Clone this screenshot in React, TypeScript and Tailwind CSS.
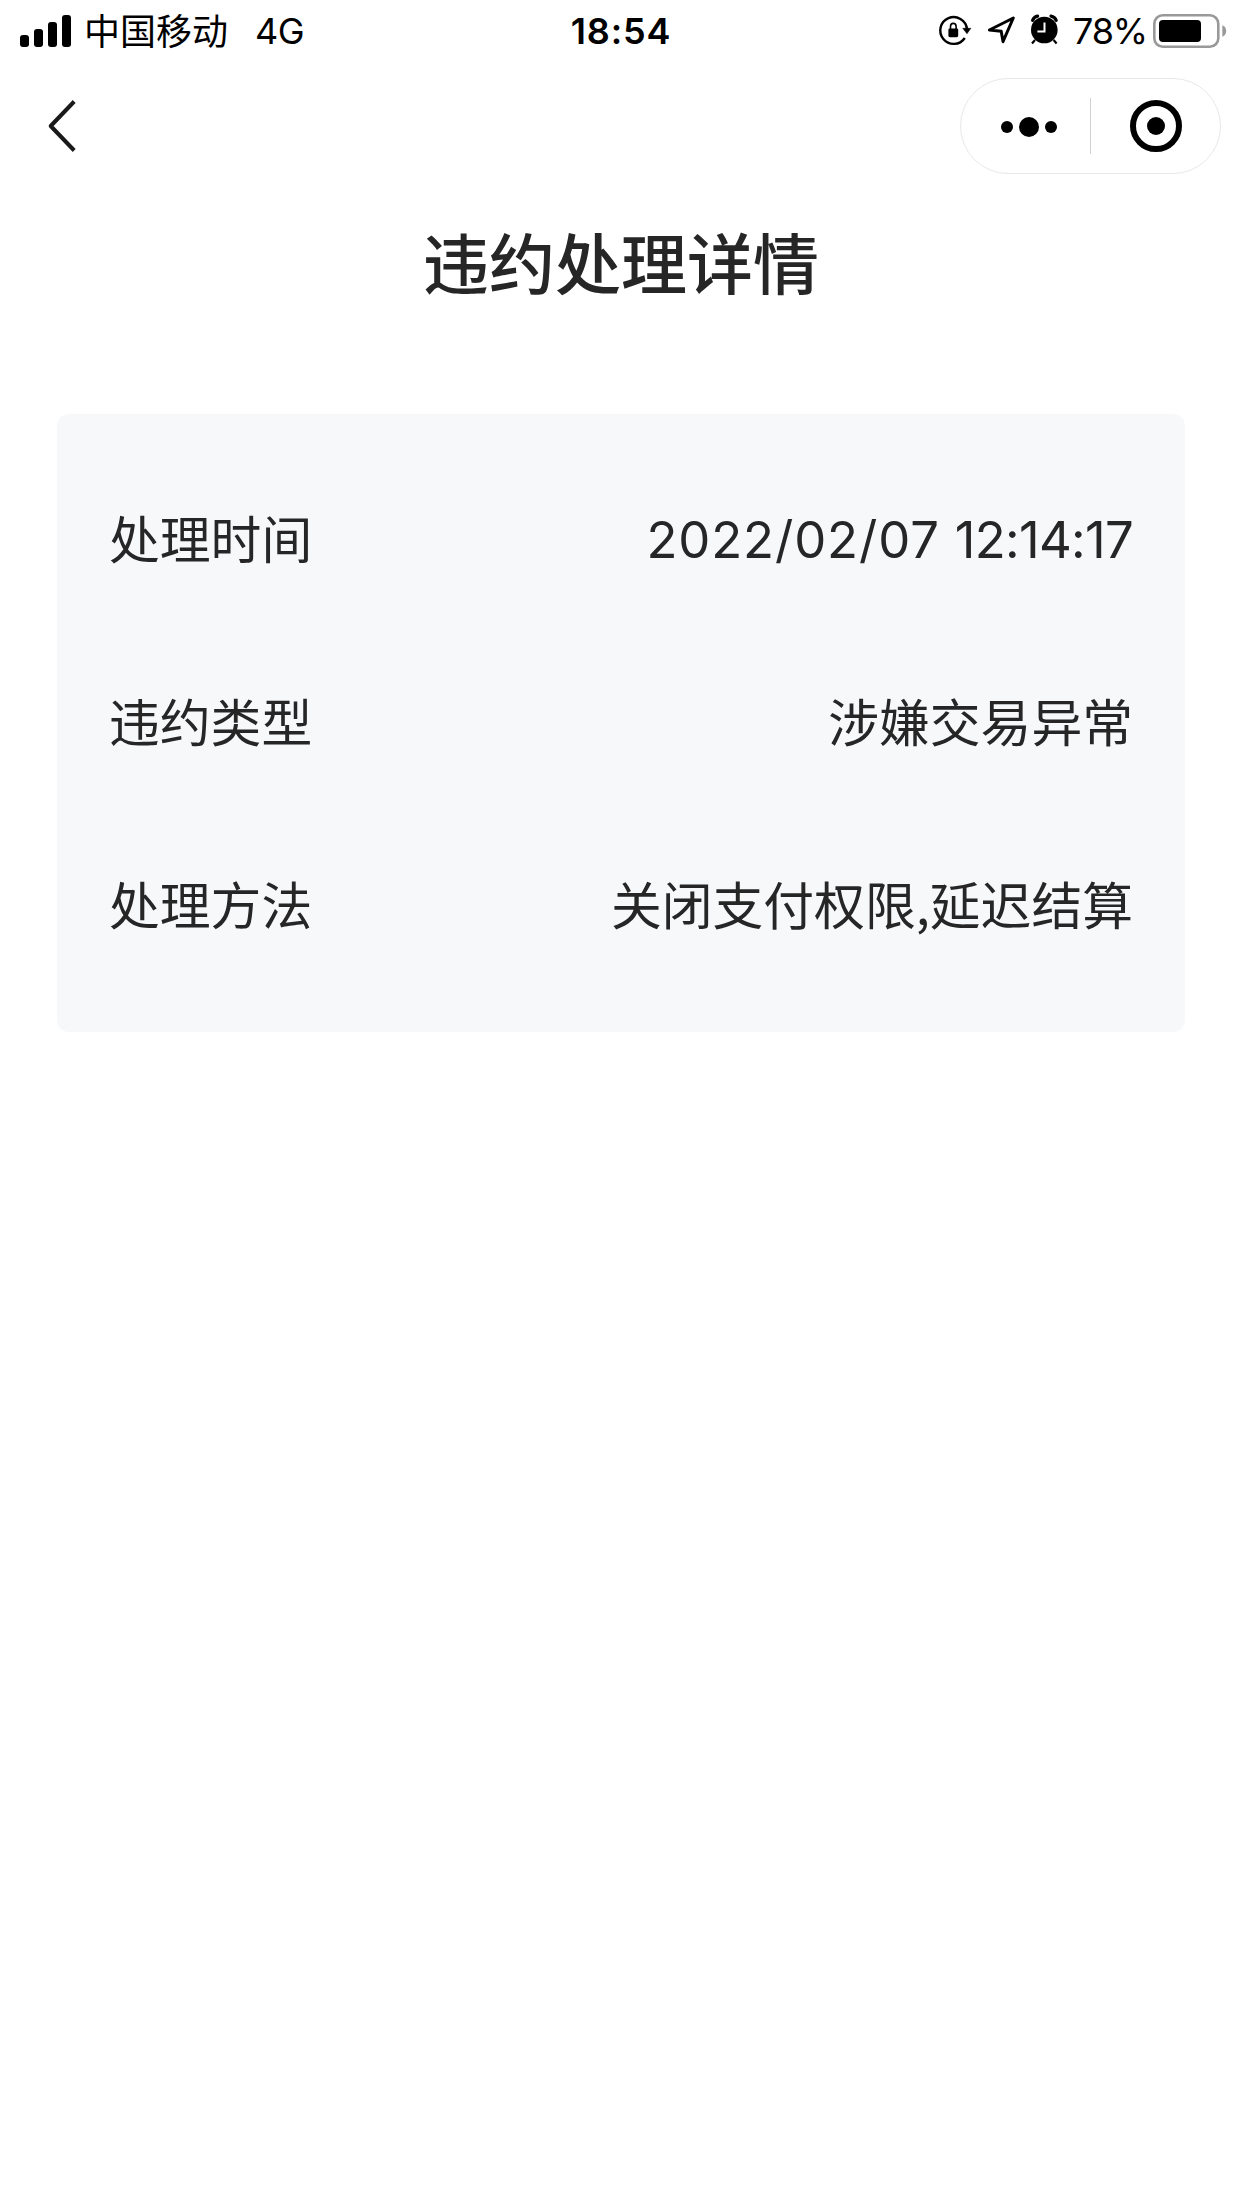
import type { ReactNode } from 'react';

interface DetailRow {
  label: string;
  value: ReactNode;
}

// The date and the time have slightly different letter spacing
function Timestamp({ date, time }: { date: string; time: string }) {
  return (
    <span className="flex gap-[15px] pt-1.5 font-['Inter',sans-serif] font-[370]">
      <span className="tracking-[0.9px]">{date}</span>
      <span className="tracking-[-0.7px]">{time}</span>
    </span>
  );
}

const rows: DetailRow[] = [
  { label: '处理时间', value: <Timestamp date="2022/02/07" time="12:14:17" /> },
  { label: '违约类型', value: '涉嫌交易异常' },
  { label: '处理方法', value: '关闭支付权限,延迟结算' },
];

function SignalIcon() {
  return (
    <svg className="h-8 w-[51px]" viewBox="0 0 51 32">
      <rect x="0" y="20" width="9" height="12" rx="3" />
      <rect x="14" y="14" width="9" height="18" rx="3" />
      <rect x="28" y="7" width="9" height="25" rx="3" />
      <rect x="42" y="0" width="9" height="32" rx="3" />
    </svg>
  );
}

function RotationLockIcon() {
  return (
    <svg className="h-9 w-9" viewBox="0 0 36 36" fill="none" stroke="black">
      <path d="M28.8 25A13.4 13.4 0 1 1 31 16" strokeWidth="2.4" />
      <path d="M26.8 15.3h8l-3.8 5.4z" fill="black" strokeWidth="0.6" strokeLinejoin="round" />
      <rect x="12.4" y="15.4" width="9.8" height="8.8" rx="1.4" fill="black" stroke="none" />
      <path d="M14.5 16v-2.6a2.8 3 0 0 1 5.6 0V16" strokeWidth="1.6" />
    </svg>
  );
}

function LocationIcon() {
  return (
    <svg className="h-9 w-8" viewBox="0 0 32 36" fill="none" stroke="black">
      <path
        d="M4.4 17 28.3 5 18 28.6 16.2 18.2z"
        strokeWidth="3"
        strokeLinejoin="round"
      />
    </svg>
  );
}

function AlarmIcon() {
  return (
    <svg className="h-9 w-8" viewBox="0 0 32 36" fill="none" stroke="black">
      <circle cx="15.3" cy="17" r="13.3" fill="black" stroke="none" />
      <path d="M3.6 7.4Q5 3.6 8.6 3.1M22 3.1q3.8.7 5.2 4.3" strokeWidth="3.2" strokeLinecap="round" />
      <path d="m6 27-3 3.4M24.6 27l3 3.4" strokeWidth="2.2" />
      <path d="M15.5 9.4v9H8.4" stroke="white" strokeWidth="2" />
    </svg>
  );
}

function BatteryIcon() {
  return (
    <svg className="h-[34px] w-[74px]" viewBox="0 0 74 34">
      <rect x="1.3" y="1.3" width="64" height="31.4" rx="8.5" fill="none" stroke="#999" strokeWidth="2.6" />
      <rect x="6" y="6" width="42" height="22" rx="4" />
      <path d="M69.3 11.2Q73.2 13 73.2 17T69.3 22.8z" fill="#999" />
    </svg>
  );
}

function StatusBar() {
  return (
    <div className="grid h-[62px] grid-cols-3 items-center pr-[15px] pl-5 font-['Inter','Noto_Sans_CJK_SC',sans-serif] text-[36px] leading-[62px] text-black">
      <div className="flex items-center">
        <SignalIcon />
        <span className="ml-[13px] pt-0.5 leading-[60px]">中国移动</span>
        <span className="ml-[27px] tracking-[-0.6px]">4G</span>
      </div>
      <div className="pr-[5px] text-center font-semibold tracking-[0.8px]">18:54</div>
      <div className="flex items-center justify-end">
        <RotationLockIcon />
        <span className="mr-3 ml-[13px]">
          <LocationIcon />
        </span>
        <AlarmIcon />
        <span className="mr-1.5 ml-3 tracking-[-1.2px]">78%</span>
        <BatteryIcon />
      </div>
    </div>
  );
}

function NavBar() {
  return (
    <div className="flex h-32 items-center justify-between pr-[21px] pl-[47px]">
      <button type="button" aria-label="返回">
        <svg className="h-[54px] w-8" viewBox="0 0 32 54" fill="none" stroke="#1a1a1a" strokeWidth="4">
          <path d="M27.2 2.5 3.7 27l23.5 24.5" strokeLinejoin="round" />
        </svg>
      </button>
      <div className="flex h-24 w-[261px] items-center rounded-full border border-[#e8e8e8]">
        <div className="flex w-[129px] items-center justify-center gap-1.5 pt-px pl-1.5">
          <span className="size-3 rounded-full bg-black" />
          <span className="size-5 rounded-full bg-black" />
          <span className="size-3 rounded-full bg-black" />
        </div>
        <div className="h-14 w-px bg-[#d2d2d2]" />
        <div className="flex flex-1 justify-center">
          <div className="flex size-[52px] items-center justify-center rounded-full border-[6px] border-black">
            <span className="size-[18px] rounded-full bg-black" />
          </div>
        </div>
      </div>
    </div>
  );
}

export default function App() {
  return (
    <div className="min-h-[2208px] w-[1242px] bg-white font-['Noto_Sans_CJK_SC',sans-serif] text-[#262626]">
      <StatusBar />
      <NavBar />
      <h1 className="mt-[22px] text-center text-[66px] leading-[96px] font-medium">违约处理详情</h1>
      <div className="mx-[57px] mt-[106px] flex h-[618px] flex-col rounded-xl bg-[#f7f8fa] px-[52px] pt-[31px]">
        {rows.map((row) => (
          <div key={row.label} className="flex h-[183px] items-center justify-between text-[50.8px] leading-[72px]">
            <span>{row.label}</span>
            <span>{row.value}</span>
          </div>
        ))}
      </div>
    </div>
  );
}
